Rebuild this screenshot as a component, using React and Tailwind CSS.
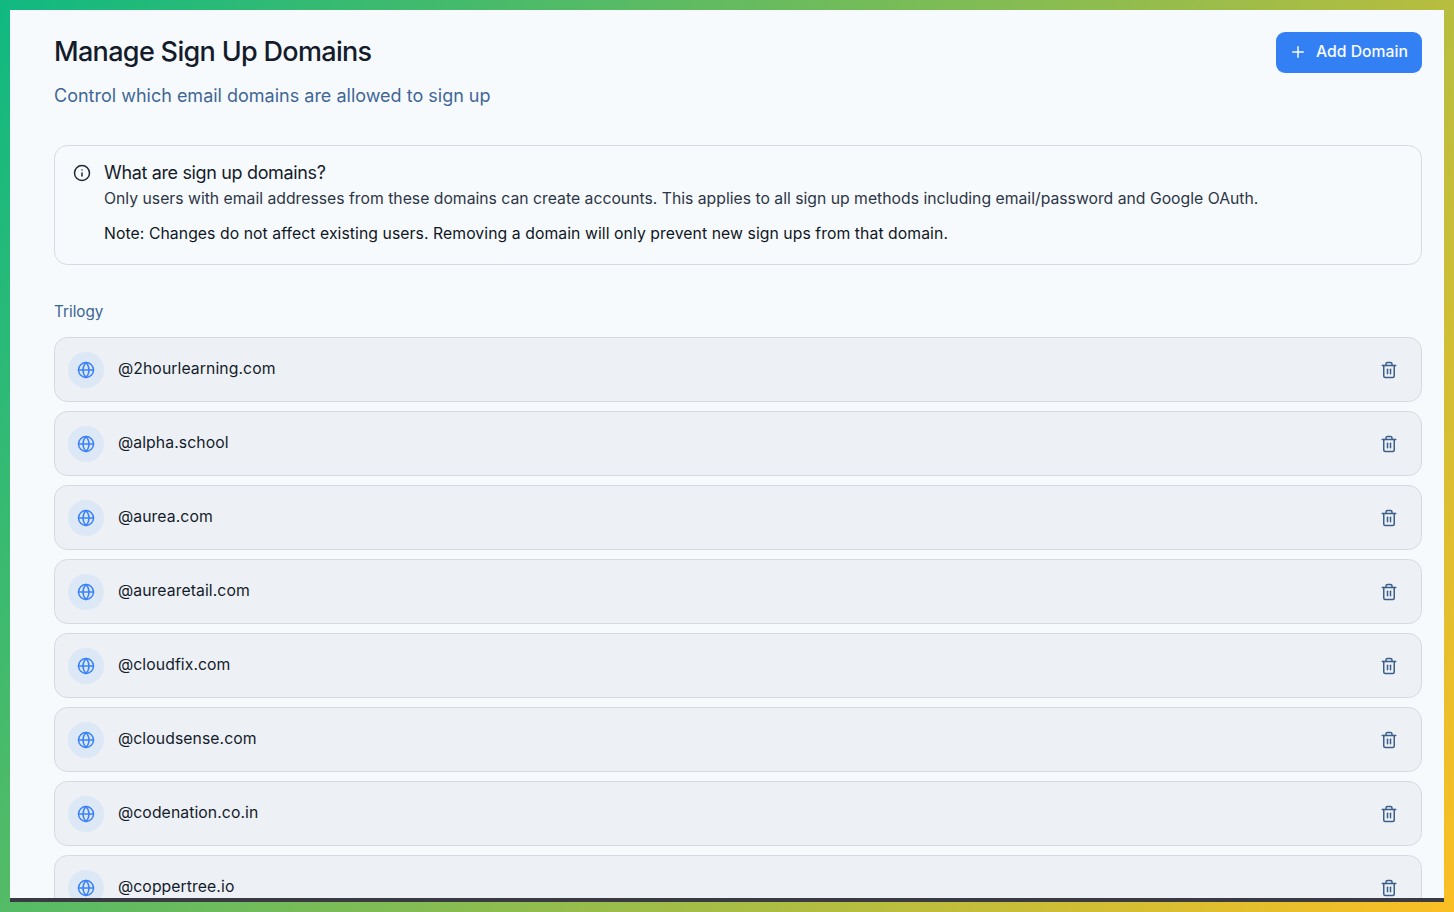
import { Globe, Info, Plus, Trash2 } from 'lucide-react';

const DOMAINS = [
  '@2hourlearning.com',
  '@alpha.school',
  '@aurea.com',
  '@aurearetail.com',
  '@cloudfix.com',
  '@cloudsense.com',
  '@codenation.co.in',
  '@coppertree.io',
];

const DomainRow = ({ domain }) => (
  <div className="flex h-[65px] shrink-0 items-center justify-between rounded-[13.5px] border border-[#d5dae2] bg-[#edf0f5] pl-[13px] pr-[23px]">
    <div className="flex items-center gap-[14px]">
      <div className="flex h-9 w-9 items-center justify-center rounded-full bg-[#dde8f6]">
        <Globe className="h-[18px] w-[18px] text-[#3b82f6]" strokeWidth={2} />
      </div>
      <span className="pb-[2px] text-[15.75px] leading-6 tracking-[0.08px] text-[#141c2b]">{domain}</span>
    </div>
    <Trash2 className="h-[18px] w-[18px] text-[#3b5f8a]" strokeWidth={2} />
  </div>
);

export default function App() {
  return (
    <div
      className="h-screen overflow-hidden bg-[linear-gradient(123deg,#10b981,#fbbf24)] p-[10px]"
      style={{ fontFamily: 'Inter, "Noto Sans", sans-serif' }}
    >
      <div className="h-full overflow-hidden border-b-4 border-[#3a3a42] bg-[#f7fafd] pl-11 pr-[22px] pt-[22px]">
        <div className="flex items-start justify-between">
          <div>
            <h1 className="text-[27px] font-medium leading-10 tracking-tight text-[#141c2b]">
              Manage Sign Up Domains
            </h1>
            <p className="mt-[10px] text-[18px] leading-7 text-[#3f6795]">
              Control which email domains are allowed to sign up
            </p>
          </div>
          <button className="flex h-[41px] items-center gap-[9px] rounded-[9px] bg-[#3380f4] pb-[1px] pl-[13px] pr-[14px] text-[15.75px] font-medium text-[#f8fbff]">
            <Plus className="h-[18px] w-[18px]" strokeWidth={2} />
            Add Domain
          </button>
        </div>

        <div className="mt-[35px] flex h-[120px] gap-[13px] rounded-[13.5px] border border-[#d5dae2] px-[18px] pt-[15px]">
          <Info className="mt-[3px] h-[18px] w-[18px] shrink-0 text-[#1d2735]" strokeWidth={2} />
          <div>
            <h2 className="text-[18px] leading-6 tracking-[-0.35px] text-[#141c2b]">What are sign up domains?</h2>
            <p className="mt-[2px] text-[15.75px] leading-6 text-[#2c3646]">
              Only users with email addresses from these domains can create accounts. This applies to all sign up methods including email/password and Google OAuth.
            </p>
            <p className="mt-[11px] text-[15.75px] leading-6 tracking-[0.07px] text-[#0f1724]">
              Note: Changes do not affect existing users. Removing a domain will only prevent new sign ups from that domain.
            </p>
          </div>
        </div>

        <h3 className="mt-[37px] text-[15.25px] font-normal leading-5 text-[#3a6492]">Trilogy</h3>

        <div className="mt-[15px] flex flex-col gap-[9px]">
          {DOMAINS.map((domain) => (
            <DomainRow key={domain} domain={domain} />
          ))}
        </div>
      </div>
    </div>
  );
}
